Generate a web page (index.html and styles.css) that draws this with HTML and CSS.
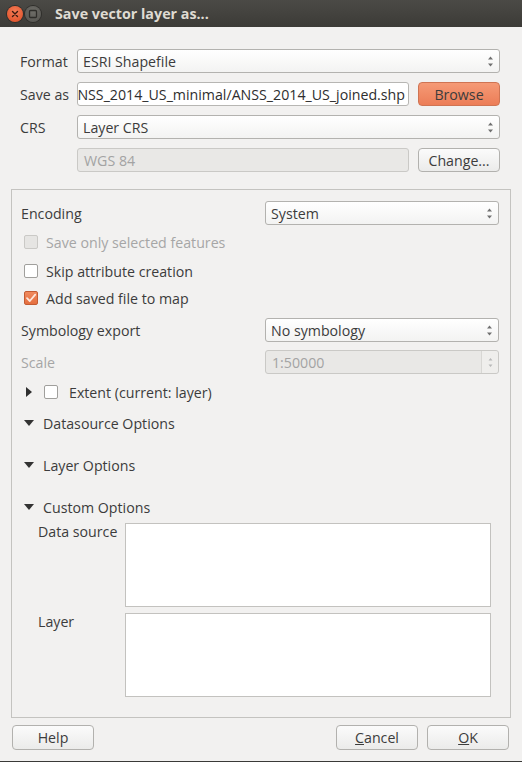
FILE: index.html
```html
<!DOCTYPE html>
<html>
<head>
<meta charset="utf-8">
<link rel="stylesheet" href="styles.css">
</head>
<body>
<div class="titlebar">
  <span class="wbtn close"><svg width="16" height="16" viewBox="0 0 16 16"><path d="M5.5 5.5 L10.5 10.5 M10.5 5.5 L5.5 10.5" stroke="#3a1a10" stroke-width="1.4" stroke-linecap="round"/></svg></span>
  <span class="wbtn max"><svg width="16" height="16" viewBox="0 0 16 16"><rect x="4.5" y="4.5" width="7" height="7" rx="1" fill="none" stroke="#2e2d2a" stroke-width="1.3"/></svg></span>
  <span class="title">Save vector layer as...</span>
</div>

<div class="top">
  <div class="row">
    <span class="label">Format</span>
    <div class="combo"><span class="val">ESRI Shapefile</span><svg class="arr" width="7" height="13" viewBox="0 0 7 13"><path d="M3.5 1.5 L6 4.5 H1Z M3.5 11.5 L6 8.5 H1Z" fill="#707070"/></svg></div>
  </div>
  <div class="row">
    <span class="label">Save as</span>
    <div class="input path"><span>ANSS_2014_US_minimal/ANSS_2014_US_joined.shp</span></div>
    <div class="btn browse">Browse</div>
  </div>
  <div class="row">
    <span class="label">CRS</span>
    <div class="combo"><span class="val">Layer CRS</span><svg class="arr" width="7" height="13" viewBox="0 0 7 13"><path d="M3.5 1.5 L6 4.5 H1Z M3.5 11.5 L6 8.5 H1Z" fill="#707070"/></svg></div>
  </div>
  <div class="row">
    <span class="label"></span>
    <div class="input disabled"><span>WGS 84</span></div>
    <div class="btn">Change...</div>
  </div>
</div>

<div class="group">
  <div class="grow">
    <span class="glabel">Encoding</span>
    <div class="combo"><span class="val">System</span><svg class="arr" width="7" height="13" viewBox="0 0 7 13"><path d="M3.5 1.5 L6 4.5 H1Z M3.5 11.5 L6 8.5 H1Z" fill="#707070"/></svg></div>
  </div>
  <div class="crow dis m5"><span class="cb cb-dis"></span><span>Save only selected features</span></div>
  <div class="crow m5"><span class="cb"></span><span>Skip attribute creation</span></div>
  <div class="crow m3"><span class="cb cb-on"><svg width="14" height="14" viewBox="0 0 14 14"><path d="M3 7.2 L5.8 10 L11.2 3.6" fill="none" stroke="#fde7dc" stroke-width="1.8" stroke-linecap="round" stroke-linejoin="round"/></svg></span><span>Add saved file to map</span></div>
  <div class="grow m8">
    <span class="glabel">Symbology export</span>
    <div class="combo"><span class="val">No symbology</span><svg class="arr" width="7" height="13" viewBox="0 0 7 13"><path d="M3.5 1.5 L6 4.5 H1Z M3.5 11.5 L6 8.5 H1Z" fill="#707070"/></svg></div>
  </div>
  <div class="grow m8">
    <span class="glabel dis">Scale</span>
    <div class="spin"><span class="val">1:50000</span><span class="spinbtn"><svg width="7" height="13" viewBox="0 0 7 13"><path d="M3.5 2 L5.5 4.5 H1.5Z M3.5 11 L5.5 8.5 H1.5Z" fill="#b8b8b8"/></svg></span></div>
  </div>
  <div class="erow m6">
    <svg class="tri-r" width="6" height="10" viewBox="0 0 6 10"><path d="M0 0 L6 5 L0 10Z" fill="#2f2f2f"/></svg>
    <span class="cb"></span>
    <span class="etext">Extent (current: layer)</span>
  </div>
  <div class="hrow m7"><svg width="10" height="6" viewBox="0 0 10 6"><path d="M0 0 H10 L5 6Z" fill="#333"/></svg><span>Datasource Options</span></div>
  <div class="hrow m18"><svg width="10" height="6" viewBox="0 0 10 6"><path d="M0 0 H10 L5 6Z" fill="#333"/></svg><span>Layer Options</span></div>
  <div class="hrow m18"><svg width="10" height="6" viewBox="0 0 10 6"><path d="M0 0 H10 L5 6Z" fill="#333"/></svg><span>Custom Options</span></div>
  <div class="trow m4"><span class="tlabel">Data source</span><div class="tarea"></div></div>
  <div class="trow m6"><span class="tlabel">Layer</span><div class="tarea"></div></div>
</div>

<div class="buttons">
  <div class="btn">Help</div>
  <div class="spacer"></div>
  <div class="btn"><u>C</u>ancel</div>
  <div class="btn"><u>O</u>K</div>
</div>
<div class="bottomline"></div>
</body>
</html>
```

FILE: styles.css
```css
* { box-sizing: border-box; }
html, body { margin: 0; padding: 0; }
body {
  width: 522px;
  height: 762px;
  overflow: hidden;
  background: #f2f1f0;
  font-family: "Open Sans", "DejaVu Sans", sans-serif;
  font-size: 14.2px;
  color: #3c3c3c;
  display: flex;
  flex-direction: column;
}

.titlebar {
  height: 27px;
  flex: none;
  background: linear-gradient(#4b4a46, #3c3b37);
  display: flex;
  align-items: center;
  padding-left: 7px;
}
.wbtn {
  width: 16px;
  height: 16px;
  border-radius: 50%;
  display: flex;
  margin-right: 2px;
}
.wbtn.close {
  background: radial-gradient(circle at 50% 35%, #f57c56, #dd4c24);
  box-shadow: 0 0 0 1px #2f2e2b;
}
.wbtn.max {
  background: radial-gradient(circle at 50% 35%, #6e6d68, #53524e);
  box-shadow: 0 0 0 1px #2f2e2b;
}
.title {
  margin-left: 12px;
  color: #dfdbd2;
  font-weight: 700;
  font-size: 14.3px;
}

.top {
  padding: 22px 22px 0 20px;
  display: flex;
  flex-direction: column;
  gap: 9px;
}
.row {
  display: flex;
  align-items: center;
  height: 24px;
}
.label { width: 57px; flex: none; }

.combo {
  flex: 1;
  height: 24px;
  border: 1px solid #b3b2af;
  border-radius: 3px;
  background: linear-gradient(#ffffff, #f3f3f2);
  display: flex;
  align-items: center;
  padding: 0 5px 0 5px;
}
.combo .val { flex: 1; }
.arr { flex: none; }

.input {
  width: 332px;
  height: 24px;
  border: 1px solid #b7b6b3;
  border-radius: 3px;
  background: #fff;
  display: flex;
  align-items: center;
  overflow: hidden;
  white-space: nowrap;
  padding: 0 3px 0 6px;
}
.input.path { justify-content: flex-end; color: #2e2e2e; }
.input.disabled {
  background: #e9e8e6;
  border-color: #cac9c6;
  color: #a3a3a3;
}

.btn {
  width: 82px;
  height: 24px;
  flex: none;
  margin-left: 9px;
  border: 1px solid #b2b1ae;
  border-radius: 4px;
  background: linear-gradient(#fbfbfb, #ebebea);
  display: flex;
  align-items: center;
  justify-content: center;
}
.btn.browse {
  background: linear-gradient(#f59a76, #ec7d57);
  border-color: #cf7453;
}

.group {
  margin: 17px 11px 0 11px;
  border: 1px solid #c4c3c0;
  padding: 11px 11px 20px 9px;
  display: flex;
  flex-direction: column;
}
.grow {
  display: flex;
  align-items: center;
  height: 24px;
}
.glabel { width: 244px; flex: none; }
.dis { color: #a6a6a6; }

.crow {
  display: flex;
  align-items: center;
  height: 24px;
  padding-left: 3px;
  gap: 8px;
}
.cb {
  width: 14px;
  height: 14px;
  flex: none;
  border: 1px solid #a09f9c;
  border-radius: 2px;
  background: #fff;
  display: flex;
}
.cb-dis {
  background: #e6e5e3;
  border-color: #cac9c6;
}
.cb-on {
  background: linear-gradient(#f08a5e, #e56f3f);
  border-color: #c35c33;
}
.cb-on svg { margin: -1px; }

.spin {
  flex: 1;
  height: 24px;
  border: 1px solid #cac9c6;
  border-radius: 3px;
  background: #e9e8e6;
  color: #a3a3a3;
  display: flex;
  align-items: center;
  padding-left: 6px;
}
.spin .val { flex: 1; }
.spinbtn {
  width: 17px;
  height: 22px;
  border-left: 1px solid #d8d7d4;
  background: #efeeec;
  border-radius: 0 3px 3px 0;
  display: flex;
  align-items: center;
  justify-content: center;
}

.erow {
  display: flex;
  align-items: center;
  height: 24px;
  padding-left: 5px;
}
.tri-r { flex: none; }
.erow .cb { margin-left: 12px; }
.etext { margin-left: 11px; }

.hrow {
  display: flex;
  align-items: center;
  height: 24px;
  padding-left: 3px;
  gap: 9px;
}

.trow {
  display: flex;
  align-items: flex-start;
}
.tlabel {
  width: 87px;
  margin-left: 17px;
  flex: none;
  line-height: 17px;
}
.tarea {
  width: 366px;
  height: 84px;
  background: #fff;
  border: 1px solid #c3c2bf;
}

.m3 { margin-top: 3px; }
.m4 { margin-top: 4px; }
.m5 { margin-top: 5px; }
.m6 { margin-top: 6px; }
.m7 { margin-top: 7px; }
.m8 { margin-top: 8px; }
.m18 { margin-top: 18px; }

.buttons {
  display: flex;
  margin-top: 7px;
  padding: 0 13px 0 3px;
}
.buttons .btn { height: 25px; }
.spacer { flex: 1; }
.bottomline {
  margin-top: auto;
  height: 1px;
  background: #3a3a38;
}
```
